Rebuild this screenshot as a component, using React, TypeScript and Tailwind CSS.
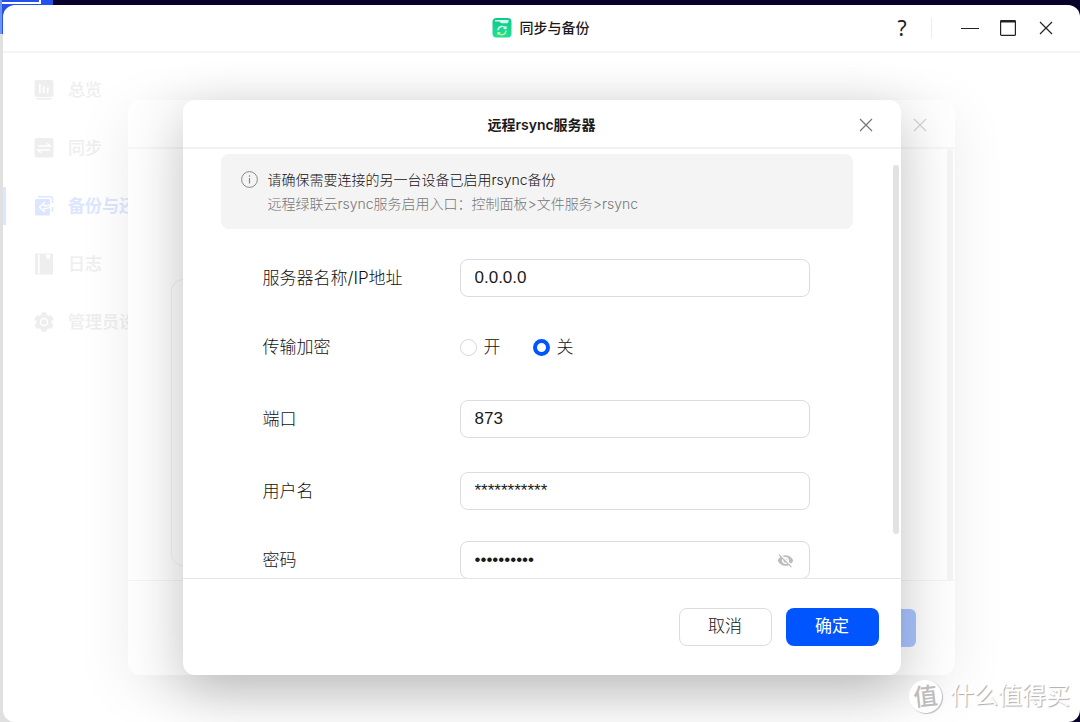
import { useState } from "react";
import type { ReactNode } from "react";
import { MdVisibilityOff } from "react-icons/md";

function CloseIcon({ className = "" }: { className?: string }) {
  return (
    <svg width="14" height="14" viewBox="0 0 14 14" fill="none" stroke="currentColor" strokeWidth="1.2" className={className} aria-hidden="true">
      <path d="M1 1l12 12M13 1L1 13" />
    </svg>
  );
}

function AppLogo() {
  return (
    <svg width="20" height="20" viewBox="0 0 20 20" aria-hidden="true">
      <defs>
        <linearGradient id="logo" x1="0" y1="0" x2="0" y2="1">
          <stop offset="0" stopColor="#0fc98a" />
          <stop offset="1" stopColor="#1fe09a" />
        </linearGradient>
      </defs>
      <rect x="0.5" y="0" width="19" height="19.5" rx="4" fill="url(#logo)" />
      <path d="M3 2h13.500v1.800c0 .9-.6 1.400-1.500 1.400H9.500c-1.200 0-1.300-1.700-2.500-1.700H3z" fill="#d9fff0" />
      <g fill="none" strokeWidth="1.4" strokeLinecap="round">
        <path d="M6 11.800a4.200 4.200 0 0 1 7.600-1.600M13.900 8.800v1.700h-1.700" stroke="#d5fff0" />
        <path d="M14 13.200a4.200 4.200 0 0 1-7.600 1.700M6.100 16.300v-1.700h1.700" stroke="#d8f58a" />
      </g>
    </svg>
  );
}

const overviewIcon = (
  <svg width="20" height="20" viewBox="0 0 20 20" fill="currentColor" aria-hidden="true">
    <path fillRule="evenodd" d="M2.500 0h15A2 2 0 0 1 19.500 2v13a2 2 0 0 1-2 2h-15a2 2 0 0 1-2-2V2a2 2 0 0 1 2-2zM5 4v9.500h1.700V4zM8.800 6v7.500h1.700V6zM12.800 7.500v6h1.700v-6z" />
    <rect x="2" y="18" width="16" height="1.500" />
  </svg>
);

const syncIcon = (
  <svg width="20" height="20" viewBox="0 0 20 20" aria-hidden="true">
    <rect x="0.500" y="0" width="19" height="19.500" rx="2.500" fill="currentColor" />
    <path d="M4 8h12l-3-2.800M16 12H4l3 2.800" fill="none" stroke="#fff" strokeWidth="1.500" />
  </svg>
);

const backupIcon = (
  <svg width="20" height="20" viewBox="0 0 20 20" aria-hidden="true">
    <path d="M4 .800h12.500a2 2 0 0 1 2 2V7M18.500 11v5" fill="none" stroke="currentColor" strokeWidth="1.500" />
    <rect x="1" y="3" width="15" height="16.500" rx="1.500" fill="currentColor" />
    <path d="M10 6.800L5.500 11.200 10 15.500v-2.800c4 0 7-1.300 9-4.700-2.500 1.500-5.500 1.800-9 1.800z" fill="currentColor" stroke="#fff" strokeWidth="1.300" />
  </svg>
);

const logIcon = (
  <svg width="20" height="22" viewBox="0 0 20 22" aria-hidden="true">
    <rect x="1" y="0.500" width="18" height="21" rx="1" fill="currentColor" />
    <path d="M4.800 1.500v19" stroke="#fff" strokeWidth="1.600" />
    <path d="M12.300 1.500h3.700v5l-1.850-1.200-1.850 1.200z" fill="#fff" />
  </svg>
);

const adminIcon = (
  <svg width="20" height="20" viewBox="0 0 20 20" aria-hidden="true">
    <path
      d="M8 .8h4l.8 2.600 1.600.9 2.700-.6 2 3.500-1.900 2v1.700l1.900 2-2 3.500-2.700-.6-1.600.9-.8 2.600H8l-.8-2.600-1.600-.9-2.700.6-2-3.500 1.900-2V9.200l-1.900-2 2-3.500 2.700.6 1.600-.9z"
      fill="currentColor"
      stroke="currentColor"
      strokeLinejoin="round"
    />
    <circle cx="10" cy="10" r="3.600" fill="none" stroke="#fff" strokeWidth="1.500" />
  </svg>
);

const navItems: { label: string; icon: ReactNode; active?: boolean }[] = [
  { label: "总览", icon: overviewIcon },
  { label: "同步", icon: syncIcon },
  { label: "备份与还原", icon: backupIcon, active: true },
  { label: "日志", icon: logIcon },
  { label: "管理员设置", icon: adminIcon },
];

function TitleBar() {
  return (
    <header className="grid h-12 grid-cols-[1fr_auto_1fr] items-center border-b-2 border-[#f4f4f4]">
      <div />
      <div className="flex items-center gap-2 pr-0.5">
        <AppLogo />
        <h1 className="text-sm font-medium text-[#1a1a1a]">同步与备份</h1>
      </div>
      <div className="flex items-center justify-end pr-[25px] text-[#222]">
        <button aria-label="帮助" className="w-6 font-['Noto_Sans'] text-[21px] leading-6">?</button>
        <span className="mr-[29px] ml-[17px] h-5 w-px bg-[#ececec]" />
        <button aria-label="最小化" className="flex h-5 w-[18px] items-center">
          <span className="h-px w-full bg-[#222]" />
        </button>
        <button aria-label="最大化" className="mx-[21px]">
          <svg width="16" height="16" viewBox="0 0 16 16" aria-hidden="true">
            <rect x="0.600" y="0.600" width="14.800" height="14.800" rx="1" fill="none" stroke="#222" strokeWidth="1.200" />
            <rect x="0.600" y="0" width="14.800" height="2.500" fill="#222" />
          </svg>
        </button>
        <button aria-label="关闭窗口" className="flex w-[18px] justify-center">
          <CloseIcon />
        </button>
      </div>
    </header>
  );
}

function Sidebar() {
  return (
    <nav className="w-[180px] pt-2">
      {navItems.map((item) => (
        <a
          key={item.label}
          href="#"
          className={
            item.active
              ? "flex h-[58px] items-center text-[17px] font-bold text-[#dce7ff]"
              : "flex h-[58px] items-center text-[17px] font-medium text-[#eeeeee]"
          }
        >
          <span className={item.active ? "mr-7 h-[38px] w-[3px] bg-[#dce7ff]" : "mr-7 h-[38px] w-[3px]"} />
          <span className="mr-3.5 w-5">{item.icon}</span>
          <span className="pt-0.5 whitespace-nowrap">{item.label}</span>
        </a>
      ))}
    </nav>
  );
}

function BackupTaskDialog() {
  return (
    <div className="flex h-[575px] w-[827px] flex-col rounded-xl bg-[#fefefe] shadow-[0_12px_56px_rgba(0,0,0,0.08)]">
      <div className="flex h-[49px] items-center justify-end border-b-2 border-[#f6f6f6] pt-0.5 pr-7 text-[#d4d4d4]">
        <CloseIcon />
      </div>
      <div className="flex flex-1 justify-between border-b border-[#f3f3f3] pl-[43px]">
        <div className="mt-[130px] mb-[14px] w-[720px] rounded-xl border border-[#f0f0f0]" />
        <div className="mr-0.5 w-1.5 rounded-t-full bg-[#f4f4f4]" />
      </div>
      <div className="flex h-[94px] justify-end pt-7 pr-[39px]">
        <div className="h-[38px] w-[93px] rounded-md bg-[#a9c5ff]" />
      </div>
    </div>
  );
}

const fieldClass =
  "h-[38px] w-full rounded-lg border border-[#dcdcdc] bg-white px-3.5 font-['Liberation_Sans'] text-[17px] text-[#1a1a1a] outline-none";

function Row({ label, htmlFor, children, className = "" }: { label: string; htmlFor: string; children: ReactNode; className?: string }) {
  return (
    <div className={`flex h-[38px] shrink-0 items-center ${className}`}>
      <label htmlFor={htmlFor} className="w-[197px] text-[17px] leading-6">
        {label}
      </label>
      <div className="relative flex w-[350px] items-center">{children}</div>
    </div>
  );
}

function RsyncDialog() {
  const [host, setHost] = useState("0.0.0.0");
  const [encrypted, setEncrypted] = useState(false);
  const [port, setPort] = useState("873");
  const [user, setUser] = useState("***********");
  const [password, setPassword] = useState("rsync12345");
  const [visible, setVisible] = useState(false);
  const radioClass =
    "size-[17px] appearance-none rounded-full border border-[#d6d6d6] bg-white checked:border-4 checked:border-[#0055ff]";

  return (
    <form
      role="dialog"
      aria-labelledby="rsync-title"
      onSubmit={(e) => e.preventDefault()}
      className="flex w-[718px] flex-col rounded-xl bg-white font-['Inter','Noto_Sans_CJK_SC',sans-serif] font-light text-[#111] shadow-[0_16px_56px_rgba(0,0,0,0.24)]"
    >
      <div className="grid h-[49px] grid-cols-[1fr_auto_1fr] items-center border-b-2 border-[#f1f1f1] pt-0.5">
        <div />
        <h2 id="rsync-title" className="text-sm font-semibold text-[#1a1a1a]">远程rsync服务器</h2>
        <button type="button" aria-label="关闭" className="mr-7 justify-self-end text-[#777]">
          <CloseIcon />
        </button>
      </div>

      <div className="flex h-[430px] overflow-hidden border-b border-[#e6e6e6] pl-[38px]">
        <div className="flex-1 pt-[5px]">
          <div className="mr-10 flex h-[75px] gap-2.5 rounded-lg bg-[#f4f4f4] pt-3.5 pl-5 text-sm leading-6">
            <svg width="17" height="17" viewBox="0 0 17 17" fill="none" stroke="#888" className="mt-[3px]" aria-hidden="true">
              <circle cx="8.500" cy="8.500" r="7.900" />
              <path d="M8.500 7v5.500M8.500 4.300v1.400" strokeWidth="1.200" />
            </svg>
            <div>
              <p>请确保需要连接的另一台设备已启用rsync备份</p>
              <p className="text-[#777]">远程绿联云rsync服务启用入口：控制面板&gt;文件服务&gt;rsync</p>
            </div>
          </div>

          <div className="flex flex-col pt-[30px] pl-[42px]">
            <Row label="服务器名称/IP地址" htmlFor="host">
              <input id="host" className={fieldClass} value={host} onChange={(e) => setHost(e.target.value)} />
            </Row>
            <Row label="传输加密" htmlFor="enc-on" className="mt-[31px]">
              <input id="enc-on" type="radio" name="enc" className={radioClass} checked={encrypted} onChange={() => setEncrypted(true)} />
              <label htmlFor="enc-on" className="mr-8 ml-[7px] text-[17px] leading-6">开</label>
              <input id="enc-off" type="radio" name="enc" className={radioClass} checked={!encrypted} onChange={() => setEncrypted(false)} />
              <label htmlFor="enc-off" className="ml-[7px] text-[17px] leading-6">关</label>
            </Row>
            <Row label="端口" htmlFor="port" className="mt-[34px]">
              <input id="port" className={fieldClass} value={port} onChange={(e) => setPort(e.target.value)} />
            </Row>
            <Row label="用户名" htmlFor="user" className="mt-[34px]">
              <input id="user" className={fieldClass} value={user} onChange={(e) => setUser(e.target.value)} />
            </Row>
            <Row label="密码" htmlFor="password" className="mt-[31px]">
              <input
                id="password"
                type={visible ? "text" : "password"}
                className={fieldClass}
                value={password}
                onChange={(e) => setPassword(e.target.value)}
              />
              <button
                type="button"
                aria-label="显示密码"
                onClick={() => setVisible(!visible)}
                className="absolute right-4 text-[#bdbdbd]"
              >
                <MdVisibilityOff size={17} />
              </button>
            </Row>
          </div>
        </div>
        <div className="mt-4 mr-0.5 h-[369px] w-1.5 rounded-full bg-[#e2e2e2]" />
      </div>

      <div className="flex justify-end gap-3.5 pt-[29px] pr-[22px] pb-[29px] text-[17px]">
        <button type="button" className="h-[38px] w-[93px] rounded-lg border border-[#dcdcdc] bg-white">取消</button>
        <button type="submit" className="h-[38px] w-[93px] rounded-lg bg-[#0055ff] font-normal text-white">确定</button>
      </div>
    </form>
  );
}

function Watermark() {
  return (
    <div className="absolute right-2.5 bottom-2 flex items-center gap-2 text-2xl leading-9 text-white [text-shadow:1px_1px_1px_#aaa]">
      <span className="flex size-[33px] -rotate-6 items-center justify-center rounded-full bg-white font-medium text-[#bcbcbc] shadow-[1px_1px_1px_#bbb] [text-shadow:none]">
        值
      </span>
      <span>什么值得买</span>
    </div>
  );
}

export default function App() {
  return (
    <div className="relative flex min-h-screen flex-col overflow-hidden bg-[#08002a] pt-[5px] pl-[3px] font-['Liberation_Sans','Noto_Sans_CJK_SC',sans-serif]">
      <div className="absolute top-0 left-0 h-full w-[20px] bg-[#e0e0e0]" />
      <div className="absolute top-0 left-0 h-[34px] w-[53px] border-l-2 border-[#6d93f5] bg-[#2450ee]">
        <div className="h-1 w-[39px] border-r-2 border-b-2 border-white" />
      </div>
      <div className="relative flex flex-1 flex-col overflow-hidden rounded-xl bg-white">
        <TitleBar />
        <main className="flex-1">
          <Sidebar />
        </main>
        <div className="absolute inset-x-0 top-[95px] flex justify-center">
          <BackupTaskDialog />
        </div>
        <div className="absolute inset-x-0 top-[95px] flex justify-center">
          <RsyncDialog />
        </div>
        <Watermark />
      </div>
    </div>
  );
}
